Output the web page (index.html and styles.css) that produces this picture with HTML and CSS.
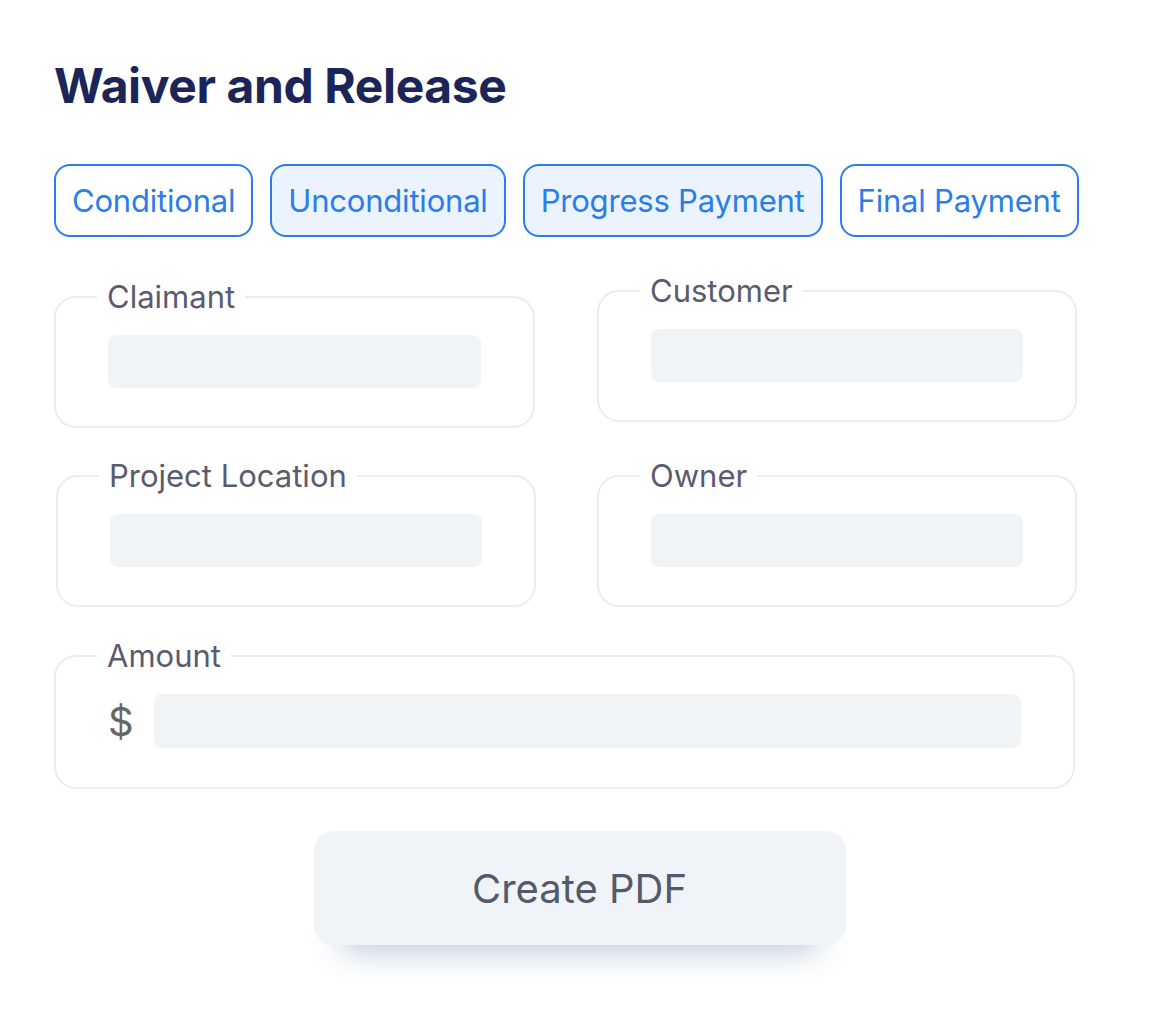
FILE: index.html
```html
<!DOCTYPE html>
<html>

<head>
    <title>Waiver and Release</title>
    <link rel="stylesheet" href="styles.css">
</head>

<body>
    <div class="page">
        <h1 class="title">Waiver and Release</h1>

        <div class="chips">
            <button class="chip">Conditional</button>
            <button class="chip chip-active">Unconditional</button>
            <button class="chip chip-active">Progress Payment</button>
            <button class="chip">Final Payment</button>
        </div>

        <div class="fields">
            <fieldset class="field field-claimant">
                <legend>Claimant</legend>
                <div class="bar"></div>
            </fieldset>
            <fieldset class="field">
                <legend>Customer</legend>
                <div class="bar"></div>
            </fieldset>
            <fieldset class="field field-location">
                <legend>Project Location</legend>
                <div class="bar"></div>
            </fieldset>
            <fieldset class="field">
                <legend>Owner</legend>
                <div class="bar"></div>
            </fieldset>
            <fieldset class="field field-amount">
                <legend>Amount</legend>
                <div class="amount-row">
                    <span class="currency">$</span>
                    <div class="bar bar-wide"></div>
                </div>
            </fieldset>
        </div>

        <div class="actions">
            <button class="btn-create">Create PDF</button>
        </div>
    </div>
</body>

</html>
```

FILE: styles.css
```css
:root {
    --navy: #1c2557;
    --blue: #2b7de9;
    --blue-soft: #eaf3ff;
    --border: #ececec;
    --bar: #f1f4f7;
    --label: #5b5b6d;
}

* {
    margin: 0;
    padding: 0;
    box-sizing: border-box;
}

body {
    background: white;
    font-family: Inter, 'Noto Sans', Arial, sans-serif;
    color: var(--label);
}

.page {
    width: 1160px;
    min-height: 1034px;
    padding: 58px 0 80px 54px;
}

.title {
    font-size: 48px;
    font-weight: 700;
    line-height: 56px;
    color: var(--navy);
    letter-spacing: -0.4px;
}

.chips {
    display: flex;
    gap: 17px;
    margin-top: 50px;
}

.chip {
    height: 73px;
    padding: 0 16px;
    border: 2px solid var(--blue);
    border-radius: 16px;
    background: white;
    color: var(--blue);
    font-family: inherit;
    font-size: 31px;
    letter-spacing: -0.2px;
}

.chip-active {
    background: var(--blue-soft);
}

.fields {
    display: grid;
    grid-template-columns: 481px 480px;
    column-gap: 62px;
    row-gap: 31px;
    align-items: start;
    margin-top: 37px;
}

.field {
    border: 2px solid var(--border);
    border-radius: 22px;
    padding: 21px 52px 38px;
    min-width: 0;
}

.field legend {
    margin-left: -11px;
    padding: 0 10px;
    font-size: 31px;
    line-height: 34px;
    color: var(--label);
}

.field-claimant {
    margin-top: 6px;
}

.field-location {
    margin-left: 2px;
    width: 480px;
}

.field-amount {
    grid-column: 1 / 3;
    width: 1021px;
    margin-top: 1px;
    padding-bottom: 39px;
}

.bar {
    height: 53px;
    background: var(--bar);
    border-radius: 8px;
}

.amount-row {
    display: flex;
    align-items: center;
    gap: 22px;
}

.currency {
    font-size: 40px;
    color: #666;
    width: 24px;
}

.bar-wide {
    flex: 1;
    height: 54px;
}

.actions {
    width: 1021px;
    display: flex;
    justify-content: center;
    margin-top: 42px;
}

.btn-create {
    width: 532px;
    height: 114px;
    margin-left: 30px;
    border: none;
    border-radius: 20px;
    background: #f0f4f8;
    color: #555a6a;
    font-family: inherit;
    font-size: 40px;
    box-shadow: 0 36px 30px -28px rgba(50, 100, 140, 0.3);
}
```
